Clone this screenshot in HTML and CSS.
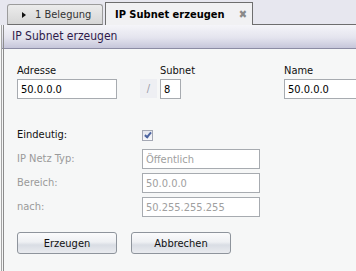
FILE: index.html
```html
<!DOCTYPE html>
<html lang="de">
<head>
    <meta charset="UTF-8">
    <title>IP Subnet erzeugen</title>
    <link rel="stylesheet" href="styles.css">
</head>
<body>
    <div class="tabs">
        <div class="tab">
            <span class="arrow"></span>
            <span>1 Belegung</span>
        </div>
        <div class="tab active">
            <span>IP Subnet erzeugen</span>
            <span class="close">&#x2716;</span>
        </div>
        <div class="tab-rest"></div>
    </div>
    <div class="panel">
        <div class="header">IP Subnet erzeugen</div>
        <div class="form">
            <div class="row-top">
                <div class="field f-adresse">
                    <label>Adresse</label>
                    <input type="text" value="50.0.0.0">
                </div>
                <div class="slash">/</div>
                <div class="field f-subnet">
                    <label>Subnet</label>
                    <input type="text" value="8">
                </div>
                <div class="field f-name">
                    <label>Name</label>
                    <input type="text" value="50.0.0.0">
                </div>
            </div>

            <div class="grid">
                <div class="lbl">Eindeutig:</div>
                <div><span class="check"></span></div>
                <div class="lbl off">IP Netz Typ:</div>
                <input type="text" value="Öffentlich" disabled>
                <div class="lbl off">Bereich:</div>
                <input type="text" value="50.0.0.0" disabled>
                <div class="lbl off">nach:</div>
                <input type="text" value="50.255.255.255" disabled>
            </div>

            <div class="buttons">
                <button>Erzeugen</button>
                <button>Abbrechen</button>
            </div>
        </div>
    </div>
</body>
</html>
```

FILE: styles.css
```css
body {
    margin: 0;
    font-family: "DejaVu Sans Condensed", "DejaVu Sans", sans-serif;
    font-size: 11px;
    background-color: #f6f7f7;
    color: #111;
    width: 356px;
    height: 271px;
    overflow: hidden;
}
.tabs {
    display: flex;
    align-items: flex-end;
    height: 25px;
    background-color: #e7e7ef;
    padding-left: 7px;
}
.tab {
    display: flex;
    flex-shrink: 0;
    align-items: center;
    height: 21px;
    width: 96px;
    box-sizing: border-box;
    border: 1px solid #9c9c9c;
    border-bottom: 1px solid #6e6e6e;
    border-radius: 3px 3px 0 0;
    background: linear-gradient(#ececec, #d6d6d6);
    color: #333;
    padding-left: 14px;
    font-size: 11px;
}
.arrow {
    width: 0;
    height: 0;
    border-top: 3px solid transparent;
    border-bottom: 3px solid transparent;
    border-left: 4px solid #111;
    margin-right: 9px;
}
.tab.active {
    height: 23px;
    width: 148px;
    margin-left: 2px;
    border: 1px solid #6e6e6e;
    border-bottom: none;
    border-radius: 0;
    background: #f1f1f3;
    color: #000;
    font-weight: bold;
    padding-left: 9px;
    justify-content: space-between;
    padding-right: 5px;
}
.close {
    color: #8a8a8a;
    font-size: 11px;
    font-weight: bold;
}
.tab-rest {
    flex: 1;
    border-bottom: 1px solid #6e6e6e;
}
.panel {
    border-left: 1px solid #a4a4a4;
    margin-left: 1px;
    height: 246px;
    position: relative;
    overflow: hidden;
}
.panel::before {
    content: "";
    position: absolute;
    left: 1px;
    top: 0;
    bottom: 0;
    width: 1px;
    background-color: #8c8c8c;
}
.header {
    height: 24px;
    line-height: 23px;
    padding-left: 10px;
    box-sizing: border-box;
    background: linear-gradient(#f5f5f9, #e4e4ee 55%, #c6c6da);
    border-bottom: 1px solid #8c8ca4;
    color: #2e1a4a;
    font-size: 12px;
}
.form {
    padding: 16px 0 0 15px;
}
.row-top {
    display: flex;
    align-items: flex-end;
}
.row-top > div {
    flex-shrink: 0;
}
.field label {
    display: block;
    margin-bottom: 3px;
    line-height: 11px;
    white-space: nowrap;
}
input {
    box-sizing: border-box;
    height: 20px;
    border: 1px solid #a7abb0;
    background-color: #fff;
    font-family: inherit;
    font-size: 11px;
    padding: 0 3px;
    color: #000;
}
.f-adresse input {
    width: 100px;
}
.slash {
    width: 17px;
    height: 19px;
    margin-left: 23px;
    margin-right: 3px;
    margin-bottom: 1px;
    background-color: #eeeff3;
    color: #9a9aa6;
    text-align: center;
    line-height: 19px;
}
.f-subnet {
    width: 21px;
}
.f-subnet input {
    width: 21px;
}
.f-name {
    margin-left: 103px;
}
.f-name input {
    width: 90px;
}
.grid {
    display: grid;
    grid-template-columns: 125px 118px;
    row-gap: 4px;
    margin-top: 26px;
    align-items: center;
}
.grid input {
    background-color: #fff;
    color: #a0a0a0;
}
.lbl {
    height: 20px;
    line-height: 20px;
}
.lbl.off {
    color: #9a9a9a;
}
.check {
    display: block;
    width: 11px;
    height: 11px;
    box-sizing: border-box;
    border: 1px solid #a4a8b4;
    background: linear-gradient(#e4e6ee, #f8f8fb);
    position: relative;
}
.check::after {
    content: "";
    position: absolute;
    left: 3px;
    top: 0;
    width: 2px;
    height: 5px;
    border-right: 2px solid #4c64a0;
    border-bottom: 2px solid #4c64a0;
    transform: rotate(40deg);
}
.buttons {
    display: flex;
    gap: 14px;
    margin-top: 15px;
}
button {
    width: 100px;
    height: 22px;
    border: 1px solid #8e949c;
    border-radius: 3px;
    background: linear-gradient(#fbfbfc, #eef0f3 45%, #d9dde4 60%, #e9ebef);
    font-family: inherit;
    font-size: 11px;
    color: #111;
    padding: 0;
}
```
